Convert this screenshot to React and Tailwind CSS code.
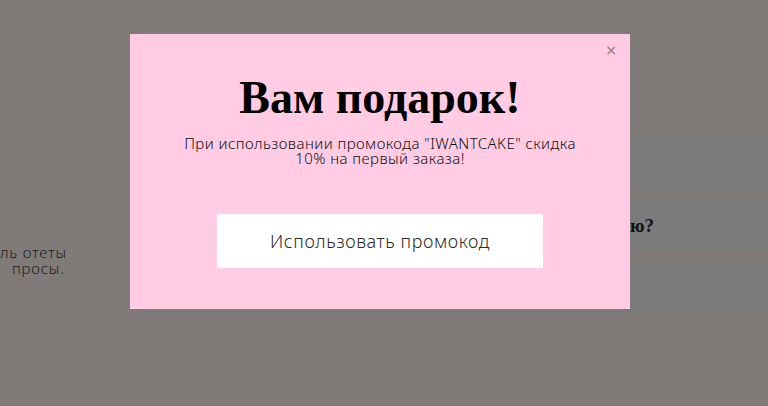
import React from "react";

// фон страницы под модальным окном
const PageBehind = () => (
  <div className="flex h-[406px] w-full bg-[#807b78]">
    <div className="w-[141px] shrink-0 pt-[244px]">
      <p className="font-['Noto_Sans',sans-serif] text-[15px] font-light leading-[16px] tracking-[0.8px] text-[#1c1c1c]">
        ль отеты
        <br />
        <span className="pl-[12px]">просы.</span>
      </p>
    </div>
    <div className="flex flex-1 flex-col gap-[10px] pt-[137px]">
      <div className="h-[53px] bg-[#7b7b7b]" />
      <div className="flex h-[52px] items-center bg-[#7b7b7b] pl-[489px] font-['Liberation_Serif',serif] text-[19px] font-bold text-[#111]">
        ю?
      </div>
      <div className="h-[51px] bg-[#7b7b7b]" />
    </div>
  </div>
);

// модальное окно с промокодом
const PromoModal = () => (
  <div className="absolute inset-0 flex pl-[130px] pt-[34px]">
    <div className="relative flex h-[275px] w-[500px] flex-col items-center bg-[#ffcce4]">
      <button className="absolute right-[13px] top-[9px] text-[14px] leading-none text-[#7a7a7a] font-['DejaVu_Sans',sans-serif]">
        ×
      </button>
      <h1 className="mt-[38px] font-['Liberation_Serif',serif] text-[46px] font-bold leading-[52px] text-black">
        Вам подарок!
      </h1>
      <p className="mt-[12px] w-[410px] text-center font-['Noto_Sans',sans-serif] text-[15px] font-light leading-[15px] tracking-[0.45px] text-[#111]">
        При использовании промокода "IWANTCAKE" скидка 10% на первый заказа!
      </p>
      <button className="mt-[48px] flex h-[54px] w-[326px] items-center justify-center bg-white font-['Noto_Sans',sans-serif] text-[18px] font-light tracking-[0.6px] text-[#2b2b2b]">
        Использовать промокод
      </button>
    </div>
  </div>
);

const App = () => {
  return (
    <div className="relative h-[406px] w-[768px] overflow-hidden">
      <PageBehind />
      <PromoModal />
    </div>
  );
};

export default App;
